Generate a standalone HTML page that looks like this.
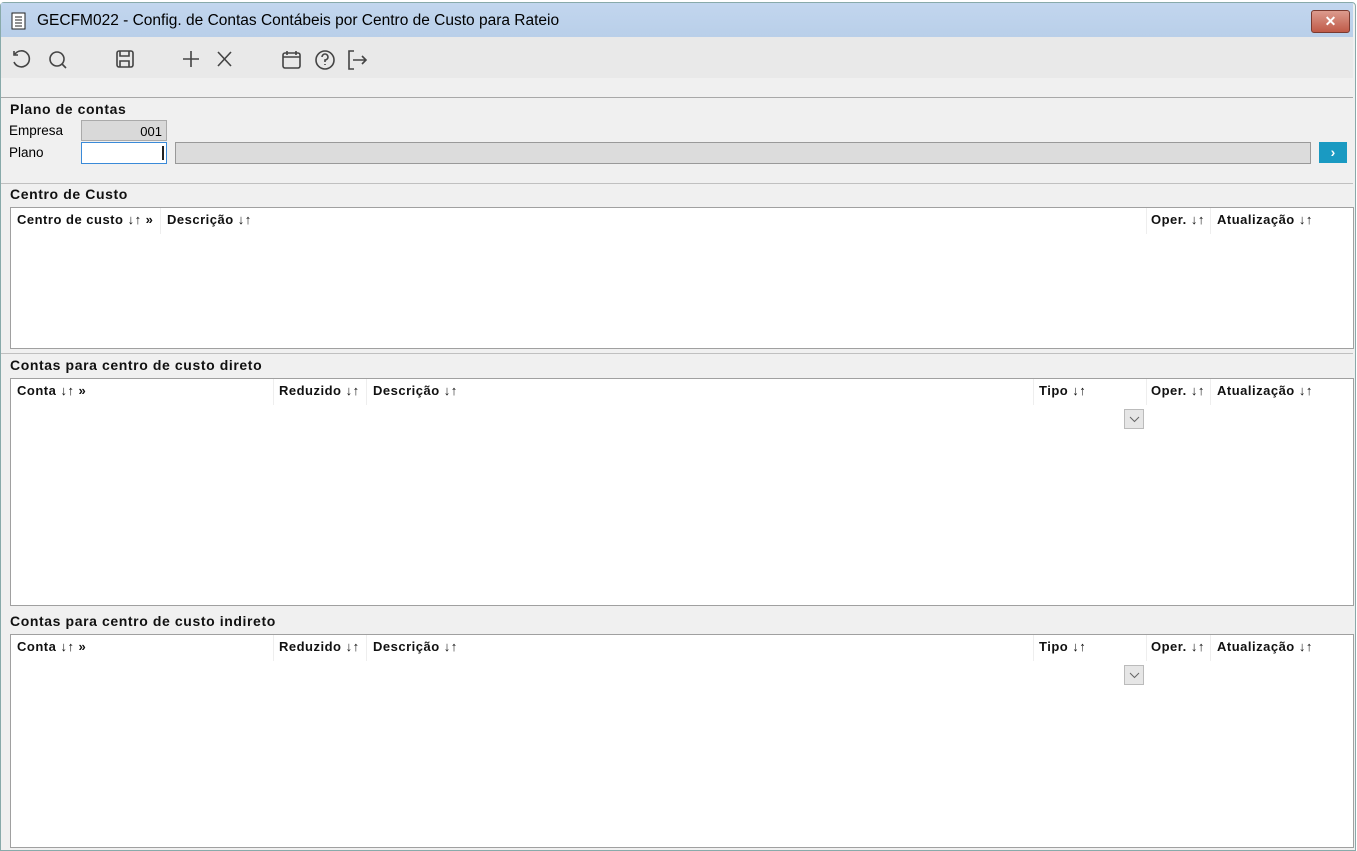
<!DOCTYPE html><html><head><style>
body{margin:0;width:1357px;height:849px;background:#fff;font-family:"Liberation Sans",Arial,sans-serif;overflow:hidden;position:relative}
.a{position:absolute}
.win{left:0;top:2px;width:1354px;height:847px;background:#f0f0f0;border:1px solid #8aa;border-radius:4px 4px 0 0}
.title{left:1px;top:3px;width:1352px;height:34px;background:linear-gradient(#c2d6ee,#b9cfe9);font-size:15.5px;color:#000}
.tb{left:1px;top:37px;width:1352px;height:41px;background:#e9e9e9}
.hl{height:1px;background:#a8a8a8;left:1px;width:1352px}
.lbl{font-size:14px;font-weight:bold;color:#111;letter-spacing:0.6px}
.grid{background:#fff;border:1px solid #a0a0a0;left:10px;width:1342px}
.h{font-size:13px;font-weight:bold;top:4px;color:#111;white-space:nowrap;letter-spacing:0.5px}
.sep{top:0;width:1px;height:26px;background:#eee}
.dd{width:20px;height:20px;background:#e6e6e6;border:1px solid #bbb;box-sizing:border-box}
svg{position:absolute}
</style></head><body>
<div class="a win"></div>
<div class="a title"><span class="a" style="left:36px;top:9px">GECFM022 - Config. de Contas Contábeis por Centro de Custo para Rateio</span>
<svg style="left:10px;top:9px" width="16" height="18"><rect x="1" y="1" width="13" height="16" fill="#fff" stroke="#222"/><path d="M4 5h7M4 8h7M4 11h7M4 14h7" stroke="#222"/></svg>
<div class="a" style="left:1310px;top:7px;width:37px;height:21px;border-radius:3px;background:linear-gradient(#dc9b8e,#c05a48);border:1px solid #7a3a30;color:#fff;font-weight:bold;text-align:center;font-size:14px;line-height:20px">✕</div></div>
<div class="a tb"></div>
<svg style="left:10px;top:48px" width="360" height="24" fill="none" stroke="#444" stroke-width="1.6">
<path d="M5 6a8 8 0 1 1-1 8M4 3v4h4"/>
<circle cx="47" cy="11" r="7"/><path d="M52 16l4 4"/>
<rect x="107" y="3" width="16" height="16" rx="2"/><path d="M110 3v5h9V3M110 19v-6h9v6"/>
<path d="M173 11h16M181 3v16M208 4l13 14M221 4l-13 14"/>
<rect x="273" y="5" width="17" height="15" rx="2"/><path d="M273 9h17M277 3v4M286 3v4"/>
<circle cx="315" cy="12" r="9"/><path d="M312 9a3 3 0 1 1 3 3v2M315 16v1"/>
<path d="M344 3h-5v18h5M343 12h13M352 8l4 4-4 4"/>
</svg>
<div class="a hl" style="top:97px"></div>
<div class="a lbl" style="left:10px;top:101px">Plano de contas</div>
<div class="a" style="left:9px;top:123px;font-size:13.5px">Empresa</div>
<div class="a" style="left:9px;top:145px;font-size:13.5px">Plano</div>
<div class="a" style="left:81px;top:120px;width:86px;height:21px;background:#d9d9d9;border:1px solid #aaa;box-sizing:border-box;font-size:13px;text-align:right;padding:3px 4px 0 0">001</div>
<div class="a" style="left:81px;top:142px;width:86px;height:22px;background:#fff;border:1px solid #3a8ad8;box-sizing:border-box"><div class="a" style="left:80px;top:3px;width:2px;height:14px;background:#222"></div></div>
<div class="a" style="left:175px;top:142px;width:1136px;height:22px;background:#dcdcdc;border:1px solid #999;box-sizing:border-box"></div>
<div class="a" style="left:1319px;top:142px;width:28px;height:21px;background:#1a9ac2;color:#fff;font-weight:bold;text-align:center;line-height:21px;font-size:14px">›</div>
<div class="a hl" style="top:183px;background:#c0c0c0"></div>
<div class="a lbl" style="left:10px;top:186px">Centro de Custo</div>
<div class="a grid" style="top:207px;height:140px">
<div class="a h" style="left:6px">Centro de custo ↓↑ »</div><div class="a sep" style="left:149px"></div>
<div class="a h" style="left:156px">Descrição ↓↑</div><div class="a sep" style="left:1135px"></div>
<div class="a h" style="left:1140px">Oper. ↓↑</div><div class="a sep" style="left:1199px"></div>
<div class="a h" style="left:1206px">Atualização ↓↑</div></div>
<div class="a hl" style="top:353px;background:#c0c0c0"></div>
<div class="a lbl" style="left:10px;top:357px">Contas para centro de custo direto</div>
<div class="a grid" style="top:378px;height:226px">
<div class="a h" style="left:6px">Conta ↓↑ »</div><div class="a sep" style="left:262px"></div>
<div class="a h" style="left:268px">Reduzido ↓↑</div><div class="a sep" style="left:355px"></div>
<div class="a h" style="left:362px">Descrição ↓↑</div><div class="a sep" style="left:1022px"></div>
<div class="a h" style="left:1028px">Tipo ↓↑</div><div class="a sep" style="left:1135px"></div>
<div class="a h" style="left:1140px">Oper. ↓↑</div><div class="a sep" style="left:1199px"></div>
<div class="a h" style="left:1206px">Atualização ↓↑</div>
<div class="a dd" style="left:1113px;top:30px"><svg style="left:4px;top:6px" width="11" height="7"><path d="M1 1l4.5 4.5L10 1" stroke="#666" fill="none"/></svg></div></div>
<div class="a lbl" style="left:10px;top:613px">Contas para centro de custo indireto</div>
<div class="a grid" style="top:634px;height:212px">
<div class="a h" style="left:6px">Conta ↓↑ »</div><div class="a sep" style="left:262px"></div>
<div class="a h" style="left:268px">Reduzido ↓↑</div><div class="a sep" style="left:355px"></div>
<div class="a h" style="left:362px">Descrição ↓↑</div><div class="a sep" style="left:1022px"></div>
<div class="a h" style="left:1028px">Tipo ↓↑</div><div class="a sep" style="left:1135px"></div>
<div class="a h" style="left:1140px">Oper. ↓↑</div><div class="a sep" style="left:1199px"></div>
<div class="a h" style="left:1206px">Atualização ↓↑</div>
<div class="a dd" style="left:1113px;top:30px"><svg style="left:4px;top:6px" width="11" height="7"><path d="M1 1l4.5 4.5L10 1" stroke="#666" fill="none"/></svg></div></div>
</body></html>
